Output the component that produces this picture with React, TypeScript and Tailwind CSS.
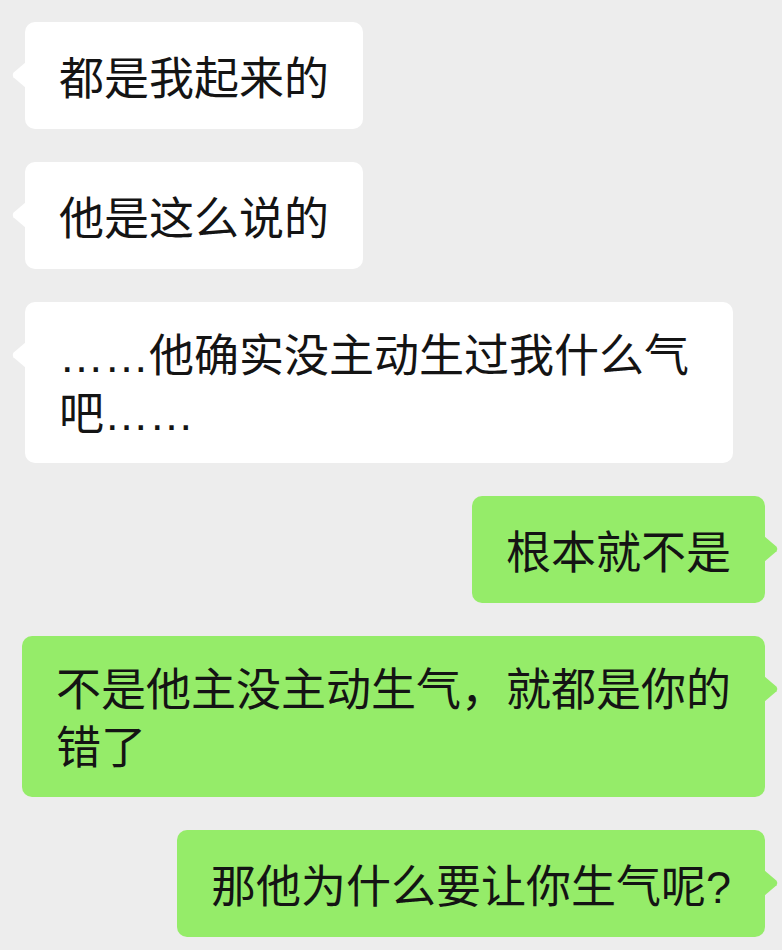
import React from 'react';

type Message = {
    text: string;
    mine: boolean;
    multiline?: boolean;
};

const messages: Message[] = [
    { text: '都是我起来的', mine: false },
    { text: '他是这么说的', mine: false },
    { text: '……他确实没主动生过我什么气吧……', mine: false, multiline: true },
    { text: '根本就不是', mine: true },
    { text: '不是他主没主动生气，就都是你的错了', mine: true, multiline: true },
    { text: '那他为什么要让你生气呢?', mine: true },
];

// ellipsis and ascii punctuation sit on the baseline in the phone font
const renderText = (text: string) =>
    text.split(/([…?]+)/).map((part, i) =>
        /^[…?]+$/.test(part) ? (
            <span key={i} className="leading-none" style={{ fontFamily: '"Liberation Sans", sans-serif' }}>
                {part}
            </span>
        ) : (
            <React.Fragment key={i}>{part}</React.Fragment>
        )
    );

const Tail: React.FC<{ mine: boolean }> = ({ mine }) => (
    <svg
        width="14"
        height="26"
        viewBox="0 0 14 26"
        className={`absolute top-[40px] ${mine ? '-right-[13px] fill-[#95ec69]' : '-left-[13px] fill-white'}`}
    >
        {mine ? (
            <path d="M0 0 L12.6 10.8 Q14 13 12.6 15.2 L0 26 Z" />
        ) : (
            <path d="M14 0 L1.4 10.8 Q0 13 1.4 15.2 L14 26 Z" />
        )}
    </svg>
);

const Bubble: React.FC<{ message: Message }> = ({ message }) => {
    const { text, mine, multiline } = message;
    return (
        <div className={`flex ${mine ? 'justify-end pr-[17px]' : 'justify-start pl-[25px]'}`}>
            <div
                className={`relative rounded-[10px] px-[34px] text-[45px] leading-[58px] text-[#141414] ${
                    mine ? 'bg-[#95ec69] max-w-[743px]' : 'bg-white max-w-[708px]'
                } ${multiline ? 'pt-[22px] pb-[23px]' : 'pt-[25px] pb-[24px]'}`}
            >
                <Tail mine={mine} />
                {renderText(text)}
            </div>
        </div>
    );
};

export default function App() {
    return (
        <div
            className="w-[782px] h-[950px] overflow-hidden bg-[#ededed] pt-[22px] flex flex-col gap-[33px]"
            style={{ fontFamily: '"Noto Sans CJK SC", sans-serif' }}
        >
            {messages.map((m, i) => (
                <Bubble key={i} message={m} />
            ))}
        </div>
    );
}
